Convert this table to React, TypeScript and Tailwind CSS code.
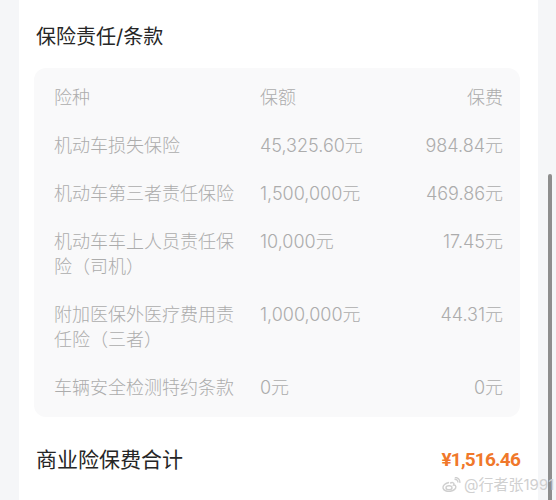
import React from 'react';

const rows = [
  { name: '机动车损失保险', amount: '45,325.60元', fee: '984.84元' },
  { name: '机动车第三者责任保险', amount: '1,500,000元', fee: '469.86元' },
  { name: '机动车车上人员责任保险（司机）', amount: '10,000元', fee: '17.45元' },
  { name: '附加医保外医疗费用责任险（三者）', amount: '1,000,000元', fee: '44.31元' },
  { name: '车辆安全检测特约条款', amount: '0元', fee: '0元' },
];

const font = { fontFamily: 'Inter, "Noto Sans CJK SC", "Noto Sans", sans-serif' };

const WeiboIcon: React.FC = () => (
  <svg width="20" height="16" viewBox="0 0 20 16" fill="none" stroke="#cfcfcf" strokeWidth="1.4">
    <path d="M8 5.5c-3.5 0.5-6.5 3-6 5.5 0.5 2.5 4 3.8 7.5 3.2 3.5-0.6 5.8-2.7 5.3-4.8-0.3-1.2-1.6-1.4-2.2-1.3 0.6-1.2 0.4-2.3-0.8-2.5-1-0.2-2.2 0.3-2.8 0.6" />
    <ellipse cx="8" cy="10.8" rx="3" ry="2" />
    <path d="M13.5 2.2c1.8-0.2 3.6 1.2 3.4 3.3" />
    <path d="M13.8 0.6c2.8-0.3 5.4 1.8 5 5.2" />
  </svg>
);

const App: React.FC = () => {
  return (
    <div className="w-[556px] h-[500px] bg-[#f5f6f8] overflow-hidden relative" style={font}>
      <div className="ml-[19px] w-[519px] h-full bg-white flex flex-col pl-[15px] pr-[18px]">
        {/* bottom of previous block */}
        <div className="h-[2px] bg-[#f6f6f7] rounded-b-md" />

        <h2 className="mt-[23px] pl-[2px] text-[20px] leading-[28px] text-[#262626]">保险责任/条款</h2>

        {/* Coverage table */}
        <div className="mt-[17px] bg-[#f9f9fa] rounded-xl pl-[20px] pr-[17px] pt-[17px] pb-[17px] flex flex-col gap-[23px] text-[18px] leading-[25px] font-light text-[#acacac]">
          <div className="grid grid-cols-[190px_1fr_auto] gap-x-[16px]">
            <span>险种</span>
            <span>保额</span>
            <span className="text-right">保费</span>
          </div>
          {rows.map((r) => (
            <div key={r.name} className="grid grid-cols-[190px_1fr_auto] gap-x-[16px]">
              <span>{r.name}</span>
              <span>{r.amount}</span>
              <span className="text-right">{r.fee}</span>
            </div>
          ))}
        </div>

        {/* Total */}
        <div className="mt-[28px] flex items-center justify-between pl-[2px]">
          <span className="text-[21px] leading-[30px] text-[#262626]">商业险保费合计</span>
          <span className="text-[19px] leading-[30px] font-bold text-[#f0782b] tracking-[-0.8px]" style={{ fontFamily: 'Roboto, "Liberation Sans", sans-serif' }}>
            ¥1,516.46
          </span>
        </div>

        {/* Buttons peeking in at the bottom */}
        <div className="mt-[26px] flex pl-[189px] gap-[59px]">
          <div className="w-[80px] h-[20px] rounded-lg border border-[#ebebeb]" />
          <div className="w-[145px] h-[20px] rounded-lg border border-[#ebebeb]" />
        </div>
      </div>

      {/* scrollbar */}
      <div className="absolute left-[548px] top-[174px] w-[4px] h-[340px] rounded-full bg-[#8e8e8e]" />

      {/* watermark */}
      <div className="absolute left-[441px] top-[476px] flex items-center gap-[3px] text-[15px] leading-[18px] text-[#d0d0d0] whitespace-nowrap">
        <WeiboIcon />
        <span>@行者张1991</span>
      </div>
    </div>
  );
};

export default App;
